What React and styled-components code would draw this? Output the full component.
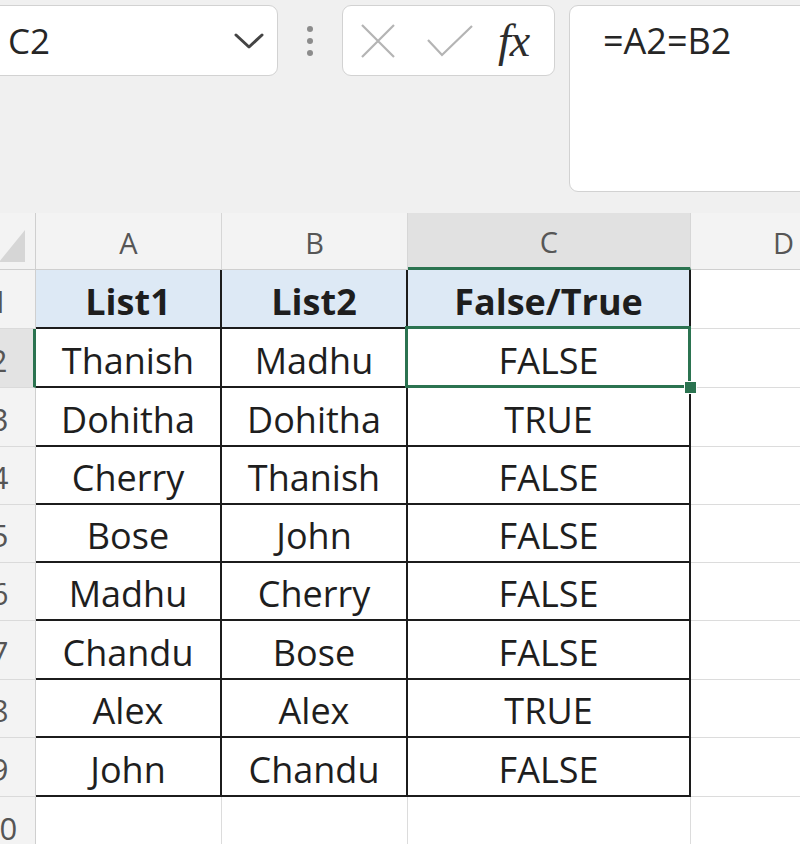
import React from "react";
import styled, { createGlobalStyle } from "styled-components";

const GREEN = "#2b7350";

const GlobalStyle = createGlobalStyle`
  html, body {
    margin: 0;
    padding: 0;
    background: #fff;
    overflow: hidden;
  }
  body {
    font-family: "Open Sans", "Liberation Sans", sans-serif;
  }
`;

const Screen = styled.div`
  width: 800px;
  height: 844px;
  overflow: hidden;
  background: #fff;
`;

const FormulaBar = styled.div`
  height: 213px;
  box-sizing: border-box;
  padding-top: 5px;
  background: #f0f0f0;
  display: flex;
  align-items: flex-start;
`;

const Box = styled.div`
  box-sizing: border-box;
  background: #fff;
  border: 1px solid #d2d2d2;
  border-radius: 9px;
  flex-shrink: 0;
`;

const NameBox = styled(Box)`
  margin-left: -14px;
  width: 292px;
  height: 71px;
  display: flex;
  align-items: center;
  justify-content: space-between;
  padding: 0 13px 0 21px;
  font-size: 35px;
  color: #262626;
`;

const Dots = styled.div`
  width: 64px;
  height: 71px;
  display: flex;
  flex-direction: column;
  align-items: center;
  justify-content: center;
  gap: 6px;
  flex-shrink: 0;

  span {
    width: 6px;
    height: 6px;
    border-radius: 50%;
    background: #8c8c8c;
  }
`;

const FxBox = styled(Box)`
  width: 213px;
  height: 71px;
  display: flex;
  align-items: center;
  padding-left: 17px;
`;

const FxLabel = styled.span`
  margin-left: 24px;
  font-family: "Liberation Serif", "DejaVu Serif", serif;
  font-style: italic;
  font-size: 46px;
  line-height: 1;
  color: #2d2d2d;
  letter-spacing: -1px;
`;

const FormulaInput = styled(Box)`
  flex: 1;
  margin-left: 14px;
  margin-right: -20px;
  height: 187px;
  padding: 10px 0 0 33px;
  font-size: 36px;
  line-height: 49px;
  color: #262626;
`;

const Sheet = styled.div`
  display: grid;
  margin-left: -36px;
  grid-template-columns: 72px 186px 186px 283px 186px 120px;
  grid-template-rows: 57px 59px 59px 59px 58px 58px 58px 59px 58px 59px 60px;
`;

const Centered = styled.div`
  box-sizing: border-box;
  display: flex;
  align-items: center;
  justify-content: center;
  white-space: nowrap;
  overflow: visible;
`;

const Corner = styled(Centered)`
  background: #f3f3f3;
  border-right: 1px solid #cfcfcf;
  border-bottom: 1px solid #cfcfcf;
  align-items: flex-end;
  justify-content: flex-end;
  padding: 0 10px 7px 0;
`;

const ColHead = styled(Centered)`
  background: ${(p) => (p.$selected ? "#e1e1e1" : "#f3f3f3")};
  border-right: 1px solid #d6d6d6;
  border-bottom: ${(p) => (p.$selected ? `3px solid ${GREEN}` : "1px solid #cfcfcf")};
  font-size: 29px;
  color: #565656;
  padding-top: 2px;
`;

const RowHead = styled(Centered)`
  background: ${(p) => (p.$selected ? "#e3e3e3" : "#f3f3f3")};
  border-right: ${(p) => (p.$selected ? `3px solid ${GREEN}` : "1px solid #cfcfcf")};
  border-bottom: 1px solid #dadada;
  font-size: 31px;
  color: #555;
  padding-top: 3px;
`;

const Cell = styled(Centered)`
  position: relative;
  background: ${(p) => (p.$header ? "#dde9f5" : "#fff")};
  border-right: 2px solid #1c1c1c;
  border-bottom: 2px solid #1c1c1c;
  padding-top: 5px;
  font-size: 36px;
  font-weight: ${(p) => (p.$header ? 700 : 400)};
  color: #1e1e1e;
  z-index: ${(p) => (p.$active ? 2 : "auto")};

  ${(p) =>
    p.$active &&
    `
    &::after {
      content: "";
      position: absolute;
      top: -3px;
      left: -3px;
      right: -2px;
      bottom: -2px;
      border: 3px solid ${GREEN};
      pointer-events: none;
    }
  `}
`;

const FillHandle = styled.span`
  position: absolute;
  right: -8px;
  bottom: -8px;
  width: 11px;
  height: 11px;
  background: ${GREEN};
  border: 1px solid #fff;
  z-index: 3;
`;

const Blank = styled.div`
  box-sizing: border-box;
  background: #fff;
  border-right: 1px solid #dcdcdc;
  border-bottom: 1px solid #dcdcdc;
`;

const columns = ["A", "B", "C", "D", ""];

const header = ["List1", "List2", "False/True"];

const rows = [
  ["Thanish", "Madhu", "FALSE"],
  ["Dohitha", "Dohitha", "TRUE"],
  ["Cherry", "Thanish", "FALSE"],
  ["Bose", "John", "FALSE"],
  ["Madhu", "Cherry", "FALSE"],
  ["Chandu", "Bose", "FALSE"],
  ["Alex", "Alex", "TRUE"],
  ["John", "Chandu", "FALSE"],
];

const Chevron = () => (
  <svg width="30" height="18" viewBox="0 0 30 18">
    <polyline
      points="2,3 15,15 28,3"
      fill="none"
      stroke="#444"
      strokeWidth="3"
      strokeLinecap="round"
      strokeLinejoin="round"
    />
  </svg>
);

const CancelIcon = () => (
  <svg width="36" height="36" viewBox="0 0 36 36">
    <path d="M2 2 L34 34 M34 2 L2 34" stroke="#b4b4b4" strokeWidth="2.2" fill="none" />
  </svg>
);

const EnterIcon = () => (
  <svg width="48" height="34" viewBox="0 0 48 34" style={{ marginLeft: 30 }}>
    <polyline points="2,16 16,31 46,2" stroke="#b4b4b4" strokeWidth="2.2" fill="none" />
  </svg>
);

const SelectAll = () => (
  <svg width="26" height="32" viewBox="0 0 26 32">
    <polygon points="0,32 26,32 26,0" fill="#d6d6d6" />
  </svg>
);

const App = () => {
  return (
    <Screen>
      <GlobalStyle />
      <FormulaBar>
        <NameBox>
          <span>C2</span>
          <Chevron />
        </NameBox>
        <Dots>
          <span />
          <span />
          <span />
        </Dots>
        <FxBox>
          <CancelIcon />
          <EnterIcon />
          <FxLabel>fx</FxLabel>
        </FxBox>
        <FormulaInput>=A2=B2</FormulaInput>
      </FormulaBar>

      <Sheet>
        <Corner>
          <SelectAll />
        </Corner>
        {columns.map((c, i) => (
          <ColHead key={"h" + i} $selected={c === "C"}>
            {c}
          </ColHead>
        ))}

        <RowHead>1</RowHead>
        {header.map((h) => (
          <Cell key={h} $header>
            {h}
          </Cell>
        ))}
        <Blank />
        <Blank />

        {rows.map((r, i) => (
          <React.Fragment key={i}>
            <RowHead $selected={i === 0}>{i + 2}</RowHead>
            {r.map((v, j) => (
              <Cell key={j} $active={i === 0 && j === 2}>
                {v}
                {i === 0 && j === 2 && <FillHandle />}
              </Cell>
            ))}
            <Blank />
            <Blank />
          </React.Fragment>
        ))}

        <RowHead>10</RowHead>
        <Blank />
        <Blank />
        <Blank />
        <Blank />
        <Blank />
      </Sheet>
    </Screen>
  );
};

export default App;
